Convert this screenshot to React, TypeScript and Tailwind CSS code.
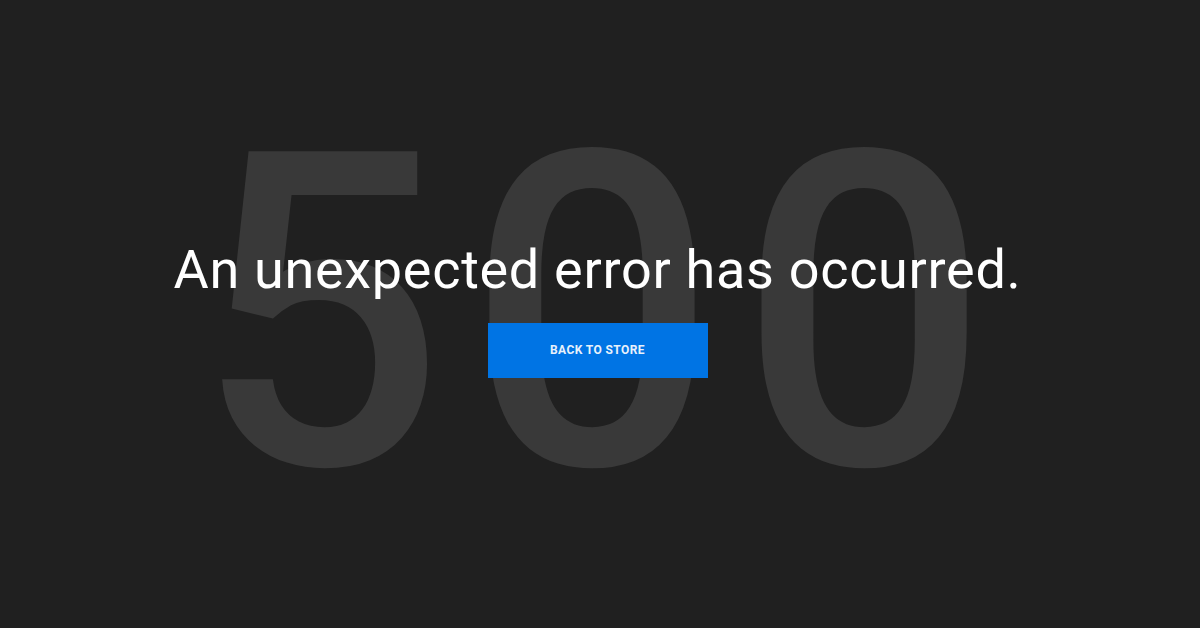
const ErrorPage = () => {
  return (
    <div className="relative h-[628px] w-[1200px] overflow-hidden bg-[#202020] font-['Roboto','Liberation_Sans',sans-serif]">
      <div className="pointer-events-none absolute inset-0 flex items-center justify-center pl-[6px] select-none">
        <span className="text-[440px] leading-none font-medium tracking-[22px] text-[#393939]">500</span>
      </div>
      <div className="relative flex h-full flex-col items-center justify-center pr-[5px] pb-[8px]">
        <h1 className="text-[54px] leading-none tracking-[0.7px] text-white">An unexpected error has occurred.</h1>
        <a
          href="#"
          className="mt-[26px] flex h-[55px] w-[220px] items-center justify-center bg-[#0074e4] text-[12px] font-bold tracking-[0.4px] text-[#e8f1fb]"
        >
          BACK TO STORE
        </a>
      </div>
    </div>
  );
};

export default function App() {
  return <ErrorPage />;
}
